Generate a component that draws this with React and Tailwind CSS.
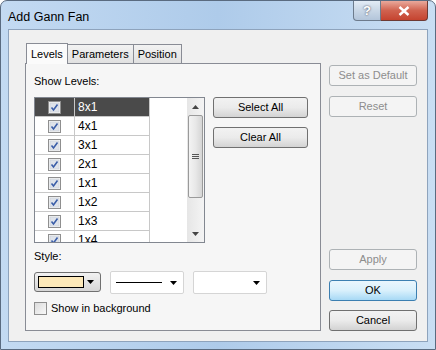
import React from 'react';

const levels = ['8x1', '4x1', '3x1', '2x1', '1x1', '1x2', '1x3', '1x4'];

function Check({ checked = true }) {
  return (
    <svg width="13" height="13" viewBox="0 0 13 13">
      <rect x="0.5" y="0.5" width="12" height="12" fill="#f4f4f4" stroke="#8f8f8f" />
      <rect x="2" y="2" width="9" height="9" fill="#dfe3ea" stroke="#c4cad4" strokeWidth="0.5" />
      {checked && <path d="M3.5 6.5 L5.5 9 L9.5 3.5" fill="none" stroke="#3b5ea8" strokeWidth="1.6" />}
    </svg>
  );
}

function Btn({ children, disabled, primary, className = '' }) {
  const base = 'h-[21px] flex items-center justify-center rounded-[3px] border text-[11px] ';
  if (disabled)
    return <div className={base + 'border-[#adb2b5] bg-[#f4f4f4] text-[#8d8d8d] ' + className}>{children}</div>;
  if (primary)
    return (
      <div className={base + 'border-[#3c7fb1] bg-gradient-to-b from-[#eaf6fd] via-[#d9f0fc] to-[#a7d9f5] text-black ' + className}>
        {children}
      </div>
    );
  return (
    <div className={base + 'border-[#707070] bg-gradient-to-b from-[#f2f2f2] via-[#ebebeb] to-[#d3d3d3] text-black ' + className}>
      {children}
    </div>
  );
}

function Caret() {
  return (
    <svg width="7" height="4" viewBox="0 0 7 4">
      <path d="M0 0 H7 L3.5 4 Z" fill="#000" />
    </svg>
  );
}

export default function App() {
  return (
    <div className="w-[436px] h-[350px] overflow-hidden bg-white" style={{ fontFamily: '"Liberation Sans", Arial, sans-serif' }}>
      <div className="w-full h-full flex flex-col rounded-t-[7px] border border-[#5a6b80] bg-gradient-to-r from-[#c3daf2] via-[#aecbea] to-[#c9def3]">
        {/* title bar */}
        <div className="h-[28px] flex items-start justify-between pl-[7px] pr-[7px]">
          <div className="pt-[7px] text-[12.5px] text-black">Add Gann Fan</div>
          <div className="flex">
            <div className="w-[28px] h-[20px] rounded-bl-[4px] border border-t-0 border-[#6d7b8c] bg-gradient-to-b from-[#e3ecf6] via-[#c9d7e6] to-[#b3c5da] flex items-center justify-center text-[13px] font-bold text-white" style={{ textShadow: '0 0 2px #334' }}>
              ?
            </div>
            <div className="w-[47px] h-[20px] rounded-br-[4px] border border-l-0 border-t-0 border-[#6d3a34] bg-gradient-to-b from-[#e9a99c] via-[#d0624f] to-[#c5432f] flex items-center justify-center">
              <svg width="12" height="10" viewBox="0 0 12 10">
                <path d="M1.5 1 L10.5 9 M10.5 1 L1.5 9" stroke="#fff" strokeWidth="2.4" />
              </svg>
            </div>
          </div>
        </div>
        {/* client */}
        <div className="mx-[7px] h-[313px] bg-[#f0f0f0] border border-[#8ea3bc] flex pl-[16px] pt-[12px]">
          <div className="w-[296px] flex flex-col">
            <div className="flex items-end h-[21px] pl-[1px]">
              <div className="h-[21px] px-[4px] border border-b-0 border-[#898c95] bg-[#fbfbfb] text-[11px] flex items-center relative z-10 -mb-px">
                Levels
              </div>
              <div className="h-[19px] px-[4px] border border-b-0 border-l-0 border-[#898c95] bg-gradient-to-b from-[#f2f2f2] to-[#e1e1e1] text-[11px] flex items-center">
                Parameters
              </div>
              <div className="h-[19px] px-[4px] border border-b-0 border-l-0 border-[#898c95] bg-gradient-to-b from-[#f2f2f2] to-[#e1e1e1] text-[11px] flex items-center">
                Position
              </div>
            </div>
            <div className="h-[268px] border border-[#898c95] bg-[#f6f6f6] pl-[8px] pt-[11px]">
              <div className="text-[11px] leading-[13px]">Show Levels:</div>
              <div className="flex mt-[9px]">
                <div className="w-[171px] h-[146px] border border-[#828790] bg-white flex overflow-hidden">
                  <div className="flex-1 flex flex-col">
                    {levels.map((l, i) => (
                      <div key={l} className={'w-[115px] h-[19px] shrink-0 flex border-b border-[#c8c8c8] ' + (i === 0 ? 'bg-[#4a4a4a]' : '')}>
                        <div className="w-[40px] border-r border-[#c8c8c8] flex items-center justify-center">
                          <Check />
                        </div>
                        <div className={'flex-1 border-r border-[#c8c8c8] pl-[3px] flex items-center text-[12px] ' + (i === 0 ? 'text-white' : 'text-black')}>
                          {l}
                        </div>
                      </div>
                    ))}
                  </div>
                  <div className="w-[17px] flex flex-col bg-gradient-to-r from-[#e6e6e6] to-[#f4f4f4]">
                    <div className="h-[17px] flex items-center justify-center">
                      <svg width="7" height="4" viewBox="0 0 7 4"><path d="M0 4 H7 L3.5 0 Z" fill="#444" /></svg>
                    </div>
                    <div className="h-[83px] mx-[1px] rounded-[2px] border border-[#9a9a9a] bg-gradient-to-r from-[#f3f3f3] via-[#e8e8e8] to-[#d5d5d5] flex flex-col items-center justify-center gap-[1px]">
                      <div className="w-[7px] h-px bg-[#555]" />
                      <div className="w-[7px] h-px bg-[#555]" />
                      <div className="w-[7px] h-px bg-[#555]" />
                    </div>
                    <div className="flex-1" />
                    <div className="h-[17px] flex items-center justify-center">
                      <svg width="7" height="4" viewBox="0 0 7 4"><path d="M0 0 H7 L3.5 4 Z" fill="#444" /></svg>
                    </div>
                  </div>
                </div>
                <div className="ml-[8px] flex flex-col gap-[9px]">
                  <Btn className="w-[95px]">Select All</Btn>
                  <Btn className="w-[95px]">Clear All</Btn>
                </div>
              </div>
              <div className="text-[11px] leading-[13px] mt-[7px]">Style:</div>
              <div className="flex gap-[9px] mt-[8px] items-start">
                <div className="w-[67px] h-[20px] mt-px rounded-[3px] border border-[#707070] bg-gradient-to-b from-[#f2f2f2] to-[#d6d6d6] flex items-center pl-[3px] gap-[3px]">
                  <div className="w-[46px] h-[12px] border border-black bg-[#fde9b9]" />
                  <Caret />
                </div>
                <div className="w-[74px] h-[23px] rounded-[2px] border border-[#d5d5d5] bg-white flex items-center pl-[5px] pr-[6px] justify-between">
                  <div className="w-[46px] h-px bg-black" />
                  <Caret />
                </div>
                <div className="w-[74px] h-[23px] rounded-[2px] border border-[#d5d5d5] bg-white flex items-center justify-end pr-[6px]">
                  <Caret />
                </div>
              </div>
              <div className="flex items-center gap-[4px] mt-[7px] h-[15px]">
                <div className="w-[13px] h-[13px] border border-[#8f8f8f] bg-gradient-to-br from-[#dcdcdc] to-[#f8f8f8]" />
                <span className="text-[11px] leading-[13px]">Show in background</span>
              </div>
            </div>
          </div>
          <div className="ml-[8px] w-[88px] flex flex-col pt-[23px] pb-[10px]">
            <Btn disabled className="w-[88px]">Set as Default</Btn>
            <Btn disabled className="w-[88px] mt-[10px]">Reset</Btn>
            <div className="flex-1" />
            <Btn disabled className="w-[88px]">Apply</Btn>
            <Btn primary className="w-[88px] mt-[10px]">OK</Btn>
            <Btn className="w-[88px] mt-[9px]">Cancel</Btn>
          </div>
        </div>
      </div>
    </div>
  );
}
